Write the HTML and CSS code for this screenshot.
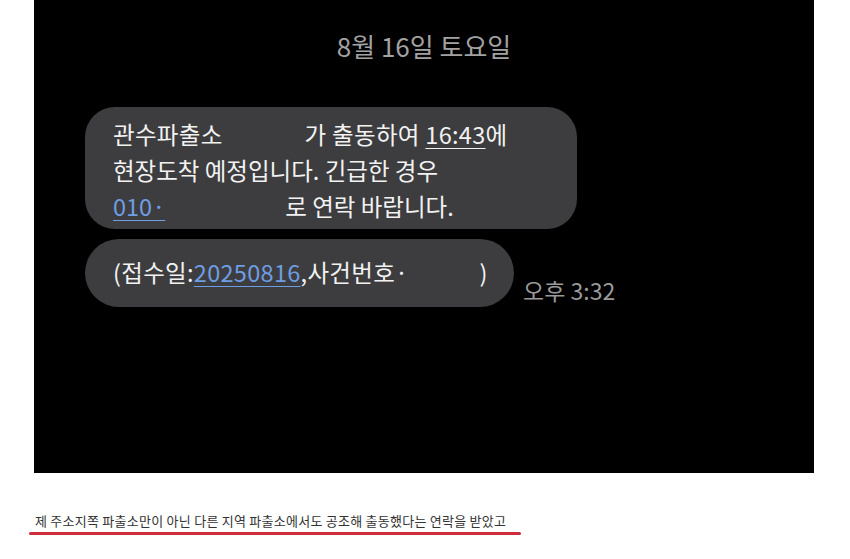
FILE: index.html
```
<!DOCTYPE html>
<html>
	<head>
		<meta charset="utf-8">
		<title>문자 캡처</title>
		<link rel="stylesheet" href="styles.css">
	</head>
	<body>
		<div class="post">
			<div class="shot">
				<div class="date">8월 16일 토요일</div>

				<div class="thread">
					<div class="bubble">
						<div class="line">관수파출소<span class="blank w1"></span>가 출동하여 <u>16:43</u>에</div>
						<div class="line">현장도착 예정입니다. 긴급한 경우</div>
						<div class="line"><span class="link">010·<span class="blank w2"></span></span><span class="blank w3"></span>로 연락 바랍니다.</div>
					</div>

					<div class="row">
						<div class="bubble pill">
							<div class="line">(접수일:<span class="link">20250816</span>,사건번호·<span class="blank w4"></span>)</div>
						</div>
						<div class="time">오후 3:32</div>
					</div>
				</div>
			</div>

			<p class="caption">제 주소지쪽 파출소만이 아닌 다른 지역 파출소에서도 공조해 출동했다는 연락을 받았고</p>
			<div class="mark"></div>
		</div>
	</body>
</html>
```
FILE: styles.css
```
body {padding: 0; margin: 0; border: 0; background-color: #ffffff;}

.post {padding-left: 34px;}
.shot {width: 780px; height: 473px; background-color: #000000; font-family: "Noto Sans CJK KR", "Noto Sans", sans-serif;}

.date {padding-top: 30px; line-height: 32px; text-align: center; font-size: 26px; color: #a2a2a2;}

.thread {margin: 45px 0 0 51px;}
.bubble {display: inline-block; box-sizing: border-box; width: 492px; padding: 9px 20px 5px 28px; border-radius: 30px; background-color: #3d3d3f; color: #f2f2f2; font-size: 23.5px;}
.bubble .line {line-height: 36px; white-space: nowrap;}
.bubble .line:first-child {letter-spacing: 0.3px;}
.bubble u {text-underline-offset: 4px; text-decoration-thickness: 1px;}

.blank {display: inline-block; vertical-align: middle;}
.w1 {width: 82px;}
.w2 {width: 34px;}
.w3 {width: 86px;}
.w4 {width: 71px;}

.link {color: #6f9de3; text-decoration: underline; text-underline-offset: 4px; text-decoration-thickness: 1px;}

.row {display: flex; align-items: flex-end; margin-top: 10px;}
.pill {width: 429px; height: 68px; padding: 15px 20px 0 28px; border-radius: 34px;}
.time {margin: 0 0 3px 9px; font-size: 23px; line-height: 28px; color: #9a9a9a;}

.caption {margin: 38px 0 0 1px; font-family: "Noto Sans CJK KR", sans-serif; font-size: 13px; line-height: 20px; letter-spacing: 0.25px; color: #333333;}
.mark {width: 492px; height: 3px; margin: 1px 0 0 -5px; border-radius: 2px; background-color: #cc2e3a;}
```
